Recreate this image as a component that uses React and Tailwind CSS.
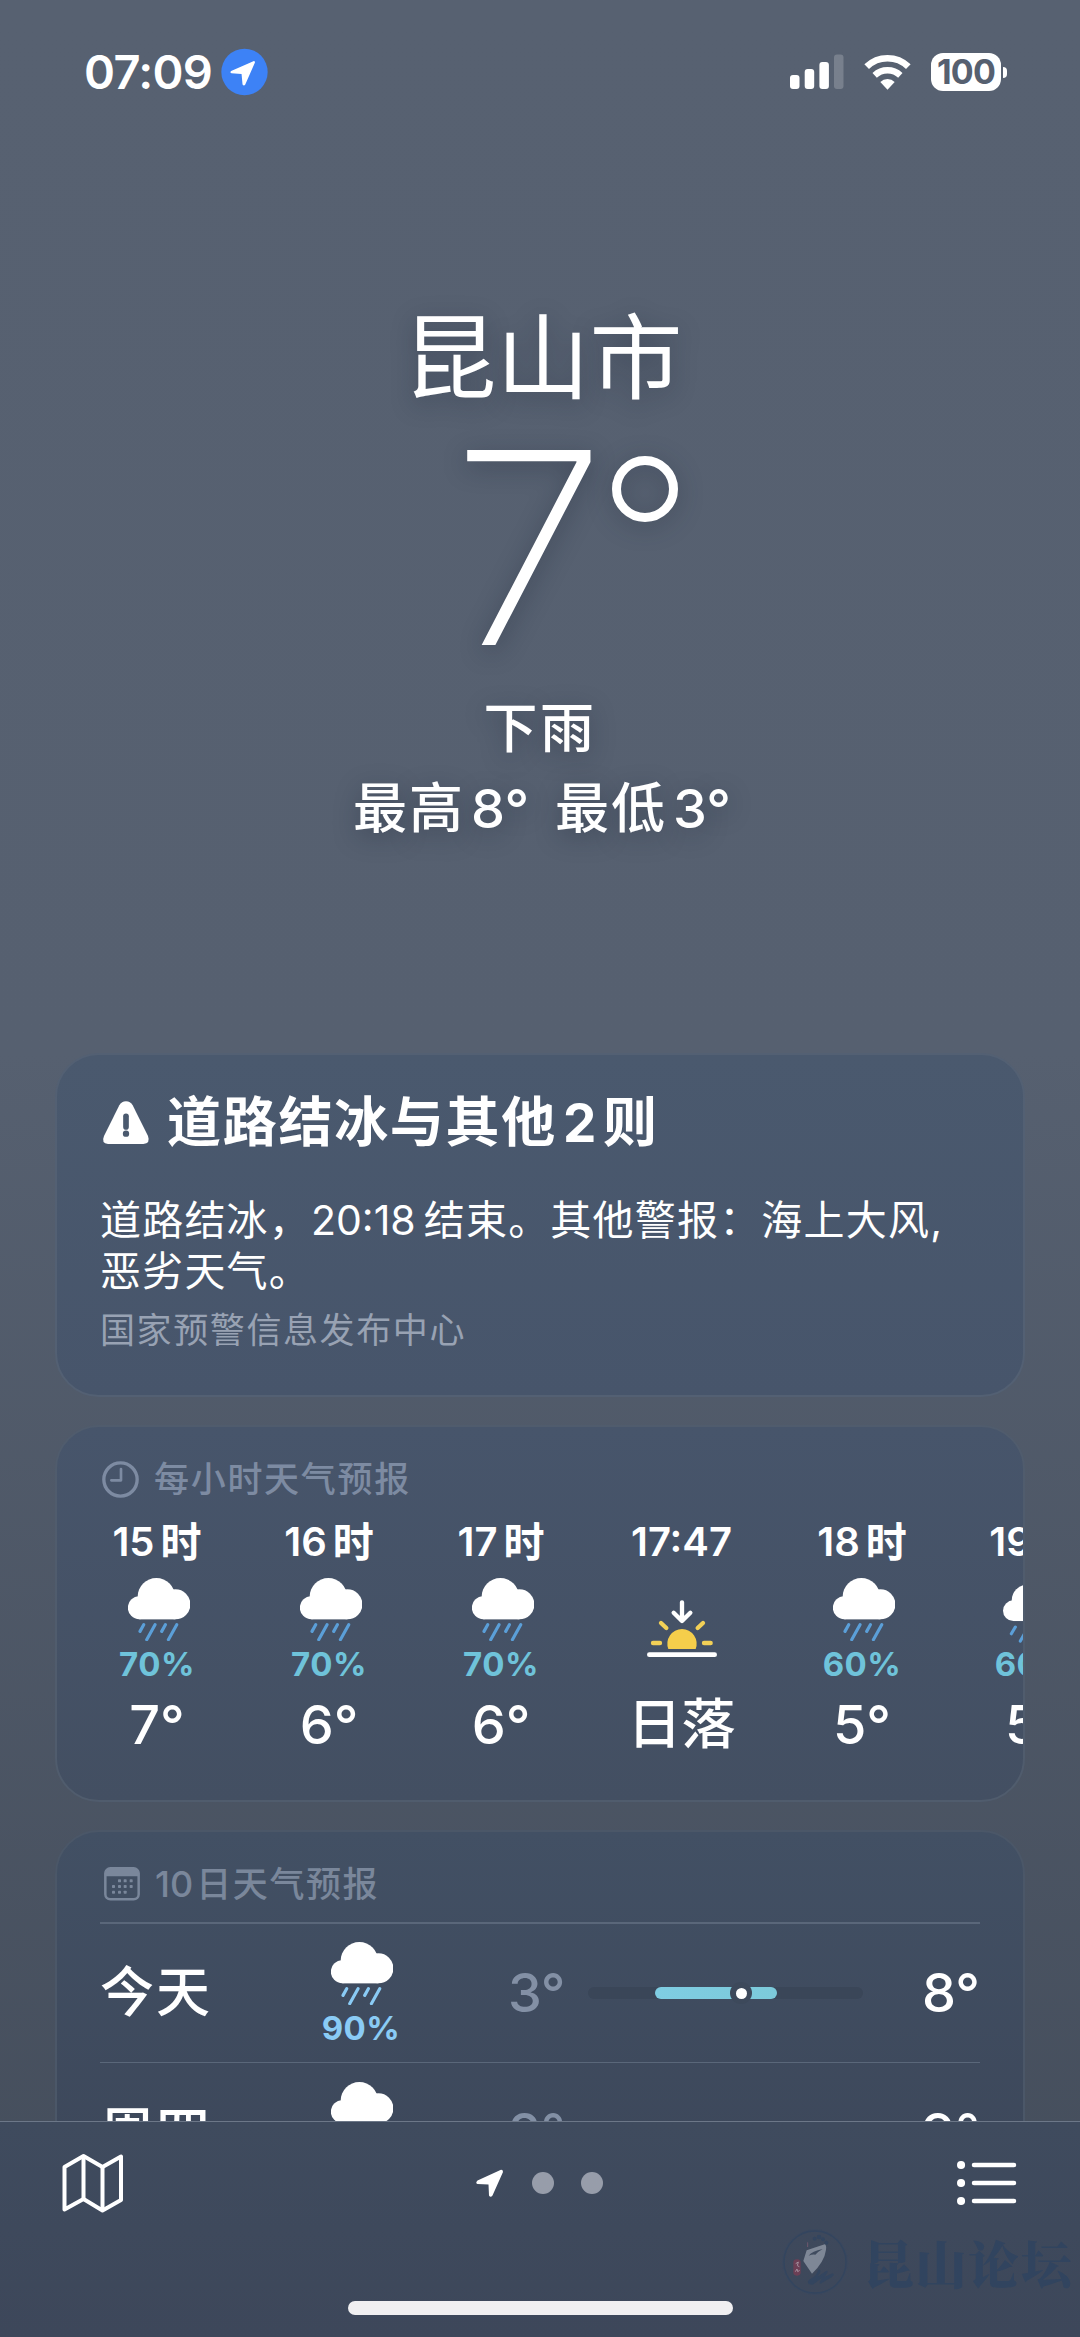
import React from "react";

const hours = [
  { label: "15", unit: "时", chance: "70%", temp: "7°" },
  { label: "16", unit: "时", chance: "70%", temp: "6°" },
  { label: "17", unit: "时", chance: "70%", temp: "6°" },
  { label: "17:47", sunset: true, temp: "日落" },
  { label: "18", unit: "时", chance: "60%", temp: "5°" },
  { label: "19", unit: "时", chance: "60%", temp: "5°", light: true },
];

const days = [
  { name: "今天", chance: "90%", low: "3°", high: "8°", start: 67, width: 122, now: 153 },
  { name: "周四", chance: "80%", low: "2°", high: "9°", start: 40, width: 160 },
];

const RainCloud = ({ rain }) => (
  <svg width="62.4" height="63.4" viewBox="0 0 187 190" className="shrink-0">
    <g fill="#fff">
      <circle cx="85" cy="56" r="56" />
      <circle cx="142" cy="79" r="45" />
      <circle cx="34" cy="89" r="34.5" />
      <rect x="34" y="60" width="108" height="64" />
    </g>
    <path
      d="M47 140l-11 20M81 140l-25 45M112 140l-11 20M146 140l-25 45"
      stroke={rain}
      strokeWidth="9.5"
      strokeLinecap="round"
    />
  </svg>
);

const LightRain = () => (
  <svg width="62.4" height="63.4" viewBox="16 0 187 190" className="shrink-0 overflow-visible">
    <g fill="#fff">
      <circle cx="84" cy="68" r="48" />
      <circle cx="132" cy="89" r="39" />
      <circle cx="41" cy="98" r="31" />
      <rect x="41" y="70" width="91" height="59" />
    </g>
    <path
      d="M47 147l-12 20M74 168l-12 21M103 147l-12 20M130 168l-12 21"
      stroke="#5b9fd8"
      strokeWidth="9.5"
      strokeLinecap="round"
    />
  </svg>
);

const Sunset = () => (
  <svg width="70" height="57.4" viewBox="0 0 210 172" fill="none" strokeLinecap="round" strokeLinejoin="round">
    <path d="M105 7v55M80 38l25 25 25-25" stroke="#fff" strokeWidth="13" />
    <path d="M64 147a44 44 0 1 1 82 0z" fill="#f5ce4b" />
    <path d="M42 69l16 15M168 69l-16 15M18 129h21M171 129h20" stroke="#f2d057" strokeWidth="13" />
    <path d="M7 164h196" stroke="#fff" strokeWidth="14" />
  </svg>
);

const StatusBar = () => (
  <header className="flex h-[144px] shrink-0 items-center justify-between pl-[84px] pr-[73px]">
    <div className="flex items-center gap-[9px]">
      <span className="text-[47px] font-semibold leading-[48px] tracking-[-0.7px]">07:09</span>
      <svg width="47" height="48" viewBox="0 0 144 144">
        <circle cx="72" cy="72" r="71" fill="#3d82f6" />
        <path
          d="M101 38L31 69q-5 4 1 7l31 2 3 32q4 6 8 1l30-68q1-5-3-5z"
          fill="#fff"
        />
      </svg>
    </div>

    <div className="flex items-center">
      <svg width="54" height="36" viewBox="0 0 54 36" fill="#fff">
        <rect x="0" y="21" width="9.5" height="14" rx="3" />
        <rect x="14.7" y="15" width="9.5" height="20" rx="3" />
        <rect x="29.4" y="8" width="9.5" height="27" rx="3" />
        <rect x="44" y="0.5" width="9.5" height="34.5" rx="3" opacity=".2" />
      </svg>
      <svg width="47" height="36" viewBox="0 0 141 108" className="ml-[20px]" fill="none">
        <path d="M8 38a90 90 0 0 1 125 0" stroke="#fff" strokeWidth="20" />
        <path d="M32 64a56 56 0 0 1 77 0" stroke="#fff" strokeWidth="19" />
        <path d="M70.500 107L49 84a31 31 0 0 1 43 0z" fill="#fff" />
      </svg>
      <div className="ml-[20px] flex h-[38px] w-[70px] items-center justify-center rounded-[12px] bg-white">
        <span className="text-[34px] font-bold leading-[38px] tracking-[-0.8px] text-[#566070]">100</span>
      </div>
      <div className="ml-[2px] h-[11px] w-[4px] rounded-r-full bg-white" />
    </div>
  </header>
);

const Hero = () => (
  <section className="flex h-[909px] shrink-0 flex-col items-center pt-[158px] [text-shadow:0_6px_24px_rgba(20,30,45,0.35)]">
    <h1 className="pl-[6px] text-[93px] leading-[112px]">昆山市</h1>
    <div className="mt-[26px] flex pl-[49px] font-extralight">
      <span className="w-[161px] origin-left scale-x-105 text-[268px] leading-[216px]">7</span>
      <svg
        width="66"
        height="66"
        viewBox="0 0 66 66"
        className="mt-[16px] drop-shadow-[0_4px_12px_rgba(20,30,45,0.35)]"
      >
        <circle cx="33" cy="33" r="28.500" fill="none" stroke="#fff" strokeWidth="9" />
      </svg>
    </div>
    <p className="mt-[43px] text-[54px] font-medium leading-[60px] tracking-[2.500px]">下雨</p>
    <p className="mt-[20px] flex pl-[4px] text-[54px] font-medium leading-[60px] tracking-[2px]">
      <span>最高</span>
      <span className="ml-[6px] tracking-[0px]">8°</span>
      <span className="ml-[26px]">最低</span>
      <span className="ml-[6px] tracking-[0px]">3°</span>
    </p>
  </section>
);

const AlertCard = () => (
  <section className="h-[344px] shrink-0 rounded-[44px] border-2 border-[#536073] bg-linear-to-b from-[#4a596e] to-[#47556b] px-[43px] pt-[38px]">
    <div className="flex h-[60px] items-center">
      <svg width="50" height="44" viewBox="0 0 150 132" className="ml-[1px]">
        <path d="M75 1q13 0 20 12l46 92q8 23-14 24H21Q0 127 9 105L55 13Q62 1 75 1z" fill="#fff" />
        <path d="M75 46v32" stroke="#4a596e" strokeWidth="17" strokeLinecap="round" />
        <circle cx="75" cy="98" r="9.500" fill="#4a596e" />
      </svg>
      <h2 className="ml-[16px] text-[54px] font-bold leading-[60px] tracking-[1.700px]">
        道路结冰与其他<span className="ml-[6px] mr-[5px] text-[53px]">2</span>则
      </h2>
    </div>
    <p className="mt-[42px] whitespace-nowrap text-[41px] leading-[50.500px] tracking-[1.200px]">
      道路结冰，<span className="mr-[8px] tracking-[0px]">20:18</span>结束。其他警报：海上大风,
      <br />
      恶劣天气。
    </p>
    <p className="mt-[9px] text-[35px] leading-[50px] tracking-[1.600px] text-[#98a2b3]">国家预警信息发布中心</p>
  </section>
);

const HourlyCard = () => (
  <section className="mt-[28px] h-[377px] shrink-0 overflow-hidden rounded-[44px] border-2 border-[#505c6d] bg-linear-to-b from-[#47556b] to-[#434f62] pt-[32px]">
    <div className="flex h-[40px] items-center pl-[45px] text-[#7d8ba2]">
      <svg width="37" height="37" viewBox="0 0 111 111" fill="none" stroke="currentColor">
        <circle cx="55.500" cy="55.500" r="50" strokeWidth="10" />
        <path d="M57 24v34H28" strokeWidth="8" strokeLinecap="round" strokeLinejoin="round" />
      </svg>
      <h3 className="ml-[15px] text-[35px] font-medium leading-[40px] tracking-[1.700px]">每小时天气预报</h3>
    </div>

    <div className="mt-[23px] flex pl-[14px]">
      {hours.map((hour) => (
        <div
          key={hour.label}
          className={`flex shrink-0 flex-col items-center ${hour.sunset ? "w-[189px]" : "w-[172px]"}`}
        >
          <p className="flex h-[40px] whitespace-nowrap text-[40px] font-semibold leading-[40px]">
            {hour.label}
            {hour.unit && <span className="ml-[6px] text-[41px] font-semibold">{hour.unit}</span>}
          </p>
          {hour.sunset ? (
            <div className="mt-[16px] flex h-[102px] items-center">
              <Sunset />
            </div>
          ) : (
            <div className="mt-[16px] flex h-[102px] flex-col items-center">
              <div className="pl-[4px]">{hour.light ? <LightRain /> : <RainCloud rain="#5b9fd8" />}</div>
              <span className="mt-[8px] text-[33px] font-bold leading-[30px] tracking-[0.500px] text-[#6fc3da]">
                {hour.chance}
              </span>
            </div>
          )}
          <p className="mt-[15px] whitespace-nowrap text-[54px] font-medium leading-[60px]">{hour.temp}</p>
        </div>
      ))}
    </div>
  </section>
);

const TempRange = ({ day }) => (
  <div className="relative h-[12px] w-[275px] rounded-full bg-[#3a4658]">
    <div
      className="absolute inset-y-0 rounded-full bg-linear-to-r from-[#7fcde3] to-[#7ccada]"
      style={{ left: day.start, width: day.width }}
    />
    {day.now && (
      <div
        className="absolute -top-[5px] flex size-[22px] items-center justify-center rounded-full bg-[#3d495b]"
        style={{ left: day.now - 11 }}
      >
        <div className="size-[11px] rounded-full bg-white" />
      </div>
    )}
  </div>
);

const DailyCard = () => (
  <section className="mt-[28px] h-[520px] shrink-0 rounded-t-[44px] border-2 border-[#4b5768] bg-[#3e4a5d] bg-linear-to-b from-[#425064] to-[#3d485b] to-60% px-[43px] pt-[32px]">
    <div className="flex h-[40px] items-center pl-[4px] text-[#7a879b]">
      <svg width="36" height="34" viewBox="0 0 108 102" fill="none">
        <rect x="4" y="4" width="100" height="93" rx="15" stroke="currentColor" strokeWidth="7.500" />
        <path d="M3 28V18Q5 3 20 3h68q15 0 17 15v10z" fill="currentColor" />
        <g fill="currentColor">
          {[[42, 37], [59, 37], [77, 37], [24, 54], [42, 54], [59, 54], [77, 54], [24, 71], [42, 71], [59, 71]].map(
            ([x, y]) => (
              <rect key={`${x}-${y}`} x={x} y={y} width="9" height="9" rx="2" />
            )
          )}
        </g>
      </svg>
      <h3 className="ml-[15px] text-[35px] font-medium leading-[40px] tracking-[1.600px]">
        <span className="mr-[3px] text-[36px] tracking-[0px]">10</span>日天气预报
      </h3>
    </div>

    <div className="mt-[18px]">
      {days.map((day, index) => (
        <div
          key={day.name}
          className={`flex h-[140px] items-center border-[#5a677a] ${index === 0 ? "border-t-2" : "border-t"}`}
        >
          <span className="w-[201px] text-[54px] font-medium leading-[60px] tracking-[2px]">{day.name}</span>
          <div className="flex h-[102px] w-[120px] flex-col items-center">
            <div className="pl-[2px]">
              <RainCloud rain="#8acbf5" />
            </div>
            <span className="mt-[8px] text-[33px] font-bold leading-[30px] tracking-[0.500px] text-[#8acbf5]">
              {day.chance}
            </span>
          </div>
          <span className="w-[144px] text-right text-[54px] font-medium leading-[60px] tracking-[-0.500px] text-[#8390a5]">
            {day.low}
          </span>
          <div className="ml-[23px]">
            <TempRange day={day} />
          </div>
          <span className="flex-1 text-right text-[54px] font-medium leading-[60px]">{day.high}</span>
        </div>
      ))}
    </div>
  </section>
);

const TabBar = () => (
  <footer className="relative h-[216px] shrink-0 border-t border-[#6c7788] bg-linear-to-b from-[#3f4b5e] to-[#3d475a]">
    <div className="flex h-[122px] items-center justify-between pl-[62px] pr-[63px]">
      <svg
        width="62"
        height="60"
        viewBox="0 0 62 60"
        fill="none"
        stroke="#fff"
        strokeWidth="4"
        strokeLinejoin="round"
      >
        <path d="M2.500 14L21.500 3l19 11 18.500-10.500v43.500L40.500 57.500 21.500 46 2.500 56.500z" />
        <path d="M21.500 3v43M40.500 14v43" />
      </svg>

      <div className="flex items-center pr-[2px]">
        <svg width="27" height="28" viewBox="0 0 27 28">
          <path d="M25 .7L1.500 11.500q-2.500 2.500 0 3.500l11 .5.500 11q1.500 2.500 3.500 0L27 3q0-2.500-2-2.300z" fill="#fff" />
        </svg>
        <span className="ml-[29px] size-[22px] rounded-full bg-[#979daa]" />
        <span className="ml-[27px] size-[22px] rounded-full bg-[#979daa]" />
      </div>

      <svg width="60" height="44" viewBox="0 0 60 44" stroke="#fff" strokeWidth="4.500" strokeLinecap="round">
        <path d="M17 4h40M17 22h40M17 40h40" />
        <path d="M4 4h.1M4 22h.1M4 40h.1" strokeWidth="8" />
      </svg>
    </div>

    <div className="absolute bottom-[42px] right-[7px] flex items-center">
      <svg width="66" height="66" viewBox="0 0 198 198" fill="none">
        <circle cx="99" cy="99" r="97" stroke="#3a4861" strokeWidth="2" />
        <circle cx="99" cy="99" r="93" stroke="#33455f" strokeWidth="4" />
        <g fill="#33455f">
          <circle cx="98" cy="29" r="6" />
          <circle cx="111" cy="24" r="7" />
          <circle cx="123" cy="31" r="6" />
          <circle cx="133" cy="41" r="6" />
        </g>
        <path
          d="M108 122q10-2 6 10l-8 12 26-18q8-3 4 5l-8 12 24-10q8 4-2 11l-34 20q-6 0 0-10l4-7-28 20-12-2q-6-8 4-14 22-12 24-29z"
          fill="#33455f"
        />
        <path d="M64 96l10-32 54-18q6 2 4 16-4 35-42 72z" fill="#7e8796" />
        <path d="M80 80q10-14 42-20-14 8-22 17-8-2-20 3z" fill="#3f4b5e" />
        <path d="M77 40v14" stroke="#70586e" strokeWidth="3" />
        <rect x="34" y="91" width="22" height="49" rx="10" fill="#6c3f55" />
        <path d="M41 104l8-5-3 11 6 3M40 128l5-8 2 8 6-4" stroke="#a4909f" strokeWidth="3" />
      </svg>
      <span className="ml-[15px] font-['Noto_Serif_CJK_SC','Noto_Sans_CJK_SC',serif] text-[51px] font-black leading-[66px] tracking-[1.500px] text-[#31445f]">
        昆山论坛
      </span>
    </div>

    <div className="absolute bottom-[22px] left-[348px] h-[14px] w-[385px] rounded-full bg-[#f0eff1]" />
  </footer>
);

export default function App() {
  return (
    <div className="flex h-[2337px] w-[1080px] flex-col overflow-hidden bg-linear-to-b from-[#576171] via-[#566070] via-45% to-[#434c5a] font-['Inter','Noto_Sans_CJK_SC',sans-serif] text-white">
      <StatusBar />
      <Hero />
      <main className="flex min-h-0 flex-1 flex-col overflow-hidden px-[55px]">
        <AlertCard />
        <HourlyCard />
        <DailyCard />
      </main>
      <TabBar />
    </div>
  );
}
